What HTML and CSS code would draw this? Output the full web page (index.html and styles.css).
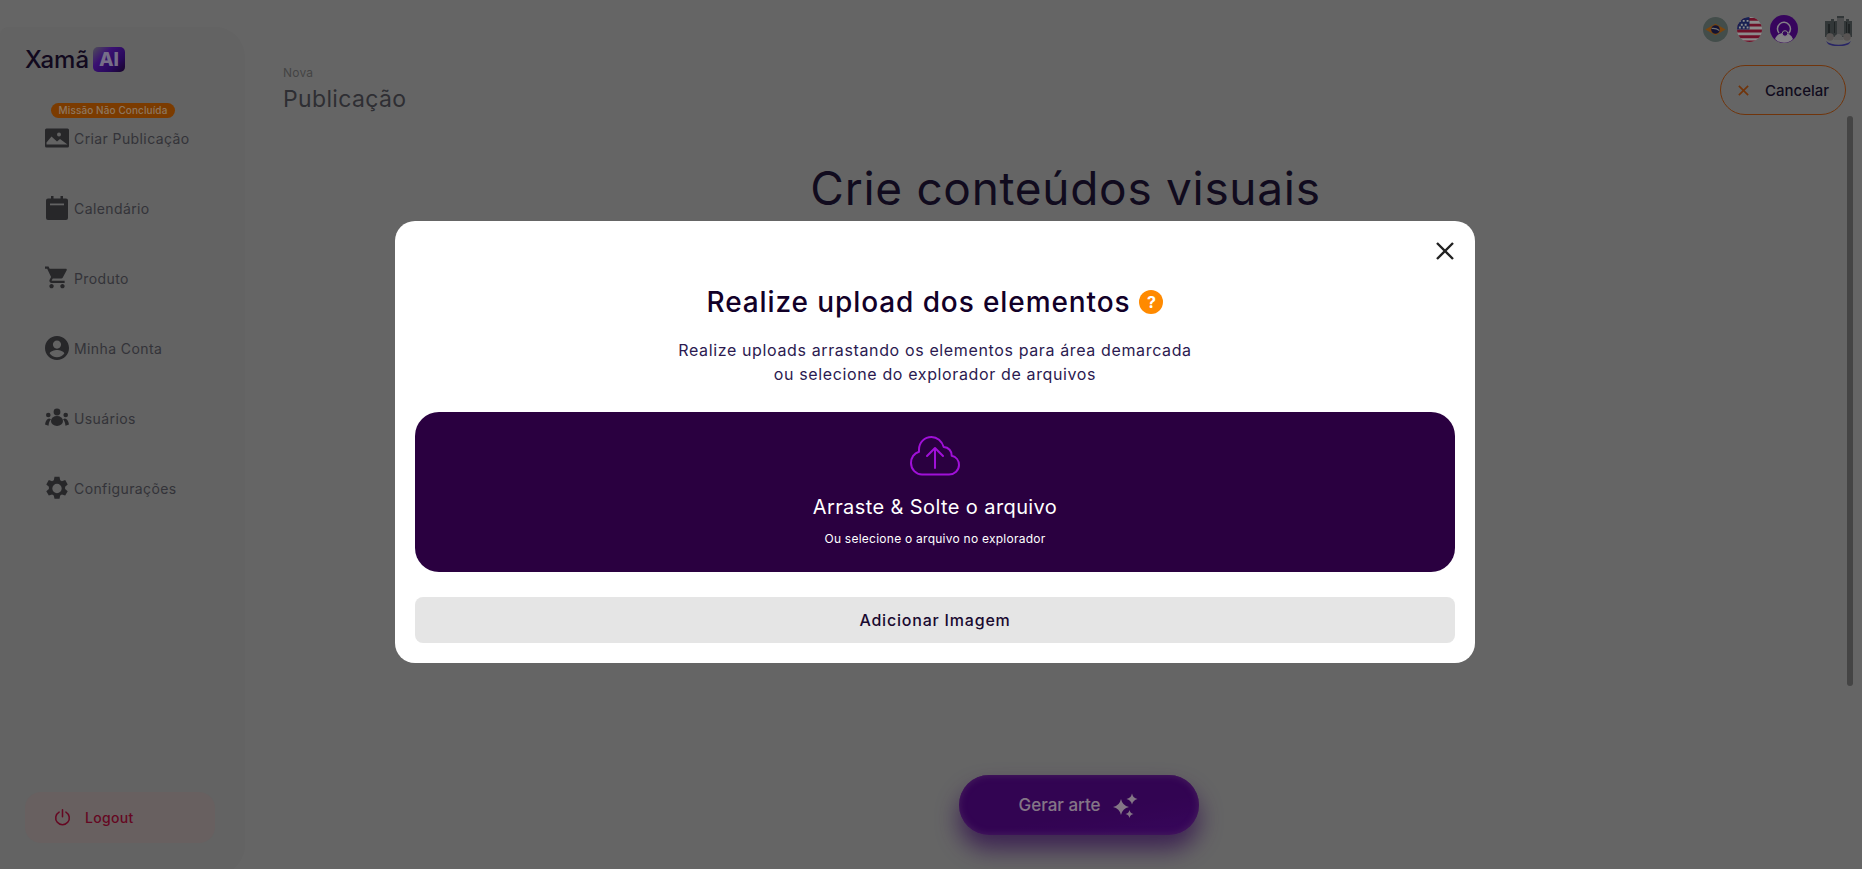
FILE: index.html
```html
<!DOCTYPE html>
<html lang="pt-BR">
<head>
<meta charset="utf-8">
<title>Xamã AI</title>
<link rel="stylesheet" href="styles.css">
</head>
<body>
<div class="app">
  <aside class="sidebar">
    <div class="logo"><span class="logo-text">Xamã</span><span class="logo-ai">AI</span></div>
    <nav class="nav">
      <a class="nav-item">
        <span class="badge">Missão Não Concluída</span>
        <svg class="nav-icon" viewBox="0 0 24 24"><path class="ic" d="M1.500 2.500h21a1.500 1.500 0 0 1 1.500 1.500v16a1.500 1.500 0 0 1-1.500 1.500h-21A1.500 1.500 0 0 1 0 20V4a1.500 1.500 0 0 1 1.500-1.500z"/><path class="ic-l" d="M1.500 18.500v-2l5-6 5.500 5 3-2.500 7.500 5.500z"/><circle class="ic-l" cx="14" cy="8.500" r="2"/></svg>
        <span>Criar Publicação</span>
      </a>
      <a class="nav-item">
        <svg class="nav-icon" viewBox="0 0 24 24"><path class="ic" d="M6 0h2.500v2.500h7V0H18v2.500h3a2 2 0 0 1 2 2V22a2 2 0 0 1-2 2H3a2 2 0 0 1-2-2V4.500a2 2 0 0 1 2-2h3z"/><rect class="ic-l" x="5" y="7.500" width="14" height="1.800"/></svg>
        <span>Calendário</span>
      </a>
      <a class="nav-item">
        <svg class="nav-icon" viewBox="1 2 22 21"><path class="ic" d="M7 18c-1.100 0-1.990.9-1.990 2S5.900 22 7 22s2-.9 2-2-.9-2-2-2zM1 2v2h2l3.600 7.590-1.350 2.450c-.16.28-.25.61-.25.96 0 1.100.9 2 2 2h12v-2H7.420c-.14 0-.25-.11-.25-.25l.03-.12.9-1.630h7.450c.75 0 1.410-.41 1.750-1.030l3.580-6.490c.08-.14.12-.31.12-.48 0-.55-.45-1-1-1H5.210l-.94-2H1zm16 16c-1.100 0-1.990.9-1.990 2s.89 2 1.990 2 2-.9 2-2-.9-2-2-2z"/></svg>
        <span>Produto</span>
      </a>
      <a class="nav-item">
        <svg class="nav-icon" viewBox="0 0 24 24"><path class="ic" d="M12 0C5.400 0 0 5.400 0 12s5.400 12 12 12 12-5.400 12-12S18.600 0 12 0zm0 4.500c2.300 0 4.100 1.800 4.100 4.100s-1.800 4.100-4.100 4.100-4.100-1.800-4.100-4.100 1.800-4.100 4.100-4.100zm0 16.800c-3 0-5.700-1.400-7.300-3.700.1-2.400 4.900-3.700 7.300-3.700s7.200 1.300 7.300 3.700c-1.600 2.300-4.300 3.700-7.300 3.700z"/></svg>
        <span>Minha Conta</span>
      </a>
      <a class="nav-item">
        <svg class="nav-icon" viewBox="0 0 24 24"><circle class="ic" cx="12" cy="6" r="3.400"/><circle class="ic" cx="3.300" cy="9" r="2.300"/><circle class="ic" cx="20.700" cy="9" r="2.300"/><ellipse class="ic" cx="12" cy="15" rx="6" ry="5"/><path class="ic" d="M4.200 12.500 C2 12.500.6 15 0 18.500l3.500 1.200C3.800 17 4.500 14.500 6 13.200zM19.800 12.500 C22 12.500 23.400 15 24 18.500l-3.500 1.200C20.200 17 19.500 14.500 18 13.200z"/></svg>
        <span>Usuários</span>
      </a>
      <a class="nav-item">
        <svg class="nav-icon" viewBox="0 0 24 24"><path class="ic" d="M9.500 0h5l.7 3.400 1.700 1 3.300-1.100 2.500 4.300-2.600 2.300v2.200l2.600 2.300-2.500 4.300-3.300-1.100-1.700 1-.7 3.400h-5l-.7-3.400-1.700-1-3.300 1.100L1.300 14.400l2.600-2.300V9.900L1.300 7.600l2.500-4.300 3.300 1.100 1.700-1zM12 7a4.700 4.700 0 1 0 0 9.400A4.700 4.700 0 0 0 12 7z" transform="translate(0 .8)"/></svg>
        <span>Configurações</span>
      </a>
    </nav>
    <button class="logout">
      <svg class="logout-icon" viewBox="0 0 20 20"><path d="M6 3.600a8 8 0 1 0 8 0M10 1v8"/></svg>
      <span>Logout</span>
    </button>
  </aside>

  <main class="main">
    <div class="topbar">
      <svg class="flag" viewBox="0 0 26 26"><circle cx="13" cy="13" r="13" fill="#7a8c88"/><path d="M13 7 23.500 13 13 19 2.500 13z" fill="#e07f18"/><circle cx="13" cy="13" r="4.500" fill="#24245c"/><path d="M9 12c2.800-.5 5.500.2 8 2" stroke="#d0d0d0" stroke-width="1.100" fill="none"/></svg>
      <svg class="flag" viewBox="0 0 26 26"><defs><clipPath id="us"><circle cx="13" cy="13" r="13"/></clipPath></defs><g clip-path="url(#us)"><rect width="26" height="26" fill="#fff"/><path d="M0 1h26v3H0zM0 7h26v3H0zM0 13h26v3H0zM0 19h26v3H0zM0 24.500h26V26H0z" fill="#c8204a"/><rect width="13" height="13" fill="#2c3c96"/><path d="M2 3h2v2H2zM6 3h2v2H6zM10 3h2v2h-2zM4 7h2v2H4zM8 7h2v2H8zM2 10h2v2H2zM6 10h2v2H6zM10 10h2v2h-2z" fill="#fff"/></g></svg>
      <svg class="avatar" viewBox="0 0 28 28"><circle cx="14" cy="14" r="14" fill="#640aaa"/><path d="M5 24c1.500-4 4.500-6 9-6s7.500 2 9 6a12.500 12.500 0 0 1-18 0z" fill="#f0ecf4"/><path d="M9 18a6.500 6.500 0 1 1 9.500 .5" fill="none" stroke="#f0ecf4" stroke-width="1.500"/><circle cx="15" cy="18.500" r="2.800" fill="#640aaa" stroke="#f0ecf4" stroke-width="1"/></svg>
      <svg class="building" viewBox="0 0 27 30"><path d="M0 5h6V3h3v2h3V0h7v5h2V3h3v2h3v16H0z" fill="#5b6466"/><rect x="12" y="2" width="7" height="18" fill="#8c8f90"/><path d="M9 6h1v11H9zM21 6h1v11h-1zM3 8h2v9H3zM23 8h2v9h-2z" fill="#3a4042"/><circle cx="5" cy="21" r="3.800" fill="#a09a98"/><circle cx="22" cy="21" r="3.800" fill="#a09a98"/><path d="M9 24c0-8 9-8 9 0z" fill="#aaa"/><path d="M1 25c6 5 19 5 25 0l-2 3c-5 3-16 3-21 0z" fill="#4b46b8"/></svg>
    </div>

    <div class="page-head">
      <div>
        <div class="kicker">Nova</div>
        <h1 class="page-title">Publicação</h1>
      </div>
      <button class="cancel">
        <svg class="cancel-x" viewBox="0 0 14 14"><path d="M2 2l10 10M12 2 2 12"/></svg>
        <span>Cancelar</span>
      </button>
    </div>

    <h2 class="hero">Crie conteúdos visuais</h2>

    <button class="generate">
      <span>Gerar arte</span>
      <svg class="sparkles" viewBox="0 0 26 26"><path d="M8 7Q9.400 13.600 16 15Q9.400 16.400 8 23Q6.600 16.400 0 15Q6.600 13.600 8 7z"/><path d="M19 1.500Q20 6 24.500 7Q20 8 19 12.500Q18 8 13.500 7Q18 6 19 1.500z"/><path d="M16.500 18Q17.200 21.300 20.500 22Q17.200 22.700 16.500 26Q15.800 22.700 12.500 22Q15.800 21.300 16.500 18z"/></svg>
    </button>

    <div class="scroll-thumb"></div>
  </main>
</div>

<div class="overlay">
  <section class="modal">
    <button class="close" aria-label="Fechar">
      <svg viewBox="0 0 18 18"><path d="M1 1l16 16M17 1 1 17"/></svg>
    </button>
    <div class="modal-head">
      <h3 class="modal-title">Realize upload dos elementos</h3>
      <span class="help">?</span>
    </div>
    <p class="modal-sub">Realize uploads arrastando os elementos para área demarcada<br>ou selecione do explorador de arquivos</p>
    <div class="dropzone">
      <svg class="cloud" viewBox="0 0 50 40"><path d="M12 38.500h27c5.500 0 10-4.300 10-9.500 0-4.500-3-8.200-7.300-9.200.3-4.700-3.200-8.500-8-8.700C32 5 27 1 21.500 1 14.500 1 9 6.500 9 13.500v2.200C4 17 1 21.800 1 27c0 6.300 5 11.500 11 11.500z"/><path d="M25 32V12M17 20l8-8 8 8"/></svg>
      <div class="drop-title">Arraste &amp; Solte o arquivo</div>
      <div class="drop-sub">Ou selecione o arquivo no explorador</div>
    </div>
    <button class="add-image">Adicionar Imagem</button>
  </section>
</div>
</body>
</html>
```
FILE: styles.css
```css
* { box-sizing: border-box; }
html, body { margin: 0; height: 100%; overflow: hidden; }
body { background: #b9b9b9; font-family: Inter, "Noto Sans", sans-serif; color: #201538; }
button { font-family: inherit; border: 0; padding: 0; background: none; }
h1, h2, h3, p { margin: 0; font-weight: 400; }

.app { display: flex; height: 869px; }

.sidebar {
  flex: 0 0 245px; height: 848px; margin-top: 27px; padding: 20px 30px 32px 25px;
  background: #b4b4b4; border-radius: 8px 30px 30px 0;
  display: flex; flex-direction: column;
}
.logo { display: flex; align-items: center; gap: 4px; height: 25px; }
.logo-text { font-size: 24px; font-weight: 500; color: #221238; }
.logo-ai {
  width: 32px; height: 25px; border-radius: 5px; display: flex; align-items: center; justify-content: center;
  background: linear-gradient(135deg, #8f8f9f 0%, #6a1fd0 35%, #4a10a8 70%, #2a0848 100%);
  color: #d8c8f8; font-weight: 800; font-size: 19px;
}
.nav { display: flex; flex-direction: column; gap: 46px; margin-top: 54px; padding-left: 20px; }
.nav-item { position: relative; display: flex; align-items: center; gap: 5px; height: 24px; font-size: 14px; color: #5e5e68; white-space: nowrap; letter-spacing: .4px; }
.nav-icon { width: 24px; height: 24px; flex: none; }
.ic { fill: #47474c; }
.ic-l { fill: #b4b4b4; }
.badge {
  position: absolute; left: 6px; top: -23px; width: 124px; height: 15px; border-radius: 8px;
  background: #e06c00; color: #ffd8b0; font-size: 10px; font-weight: 500; line-height: 15px; text-align: center; letter-spacing: .1px;
}
.logout {
  margin-top: auto; width: 190px; height: 51px; border-radius: 16px; background: #bdafaf;
  display: flex; align-items: center; gap: 14px; padding-left: 29px;
  color: #b80e3e; font-size: 14px; font-weight: 500; letter-spacing: .3px;
}
.logout-icon { width: 17px; height: 17px; fill: none; stroke: #b80e3e; stroke-width: 1.800; stroke-linecap: round; }

.main { position: relative; flex: 1; display: flex; flex-direction: column; padding: 14px 10px 34px 38px; }
.topbar { display: flex; align-items: center; justify-content: flex-end; height: 30px; }
.flag { width: 25px; height: 25px; margin-left: 9px; }
.avatar { width: 28px; height: 28px; margin-left: 8px; }
.building { width: 27px; height: 30px; margin-left: 27px; margin-top: 4px; }

.page-head { display: flex; justify-content: space-between; align-items: flex-start; margin-top: 21px; padding-right: 6px; }
.kicker { font-size: 12px; color: #7c7c7c; letter-spacing: .2px; line-height: 16px; }
.page-title { font-size: 23px; color: #55555d; line-height: 32px; letter-spacing: .35px; margin-top: 2px; }
.cancel {
  width: 126px; height: 50px; border: 1.500px solid #cc6015; border-radius: 25px;
  display: flex; align-items: center; justify-content: center; gap: 15px;
  font-size: 15px; font-weight: 500; color: #201538;
}
.cancel-x { width: 13px; height: 13px; fill: none; stroke: #cc6015; stroke-width: 1.800; }

.hero { text-align: center; font-size: 46px; color: #201538; line-height: 60px; margin: 43px 4px 0 0; letter-spacing: .7px; }

.generate {
  margin: auto 0 0 0; align-self: center; position: relative; left: 11px;
  width: 240px; height: 60px; border-radius: 30px; flex: none;
  background: linear-gradient(170deg, #5c0896 60%, #660ca6 100%);
  box-shadow: inset 0 0 6px 1px #7c34a8, 0 14px 24px rgba(90, 30, 140, .8);
  display: flex; align-items: center; justify-content: center; gap: 12px;
  color: #f0d8f4; font-size: 17px; font-weight: 500;
}
.sparkles { width: 26px; height: 26px; fill: #f0d8f4; }
.scroll-thumb { position: absolute; right: 9px; top: 116px; width: 6px; height: 570px; border-radius: 3px; background: #7c7c7c; }

.overlay {
  position: fixed; inset: 0; background: rgba(0, 0, 0, .45);
  display: flex; justify-content: center; align-items: flex-start; padding: 221px 0 0 8px;
}
.modal { position: relative; width: 1080px; height: 442px; background: #fff; border-radius: 20px; padding: 20px; display: flex; flex-direction: column; }
.close { position: absolute; top: 20px; right: 20px; width: 20px; height: 20px; display: flex; align-items: center; justify-content: center; }
.close svg { width: 18px; height: 18px; fill: none; stroke: #222; stroke-width: 2.400; }
.modal-head { display: flex; align-items: center; justify-content: center; gap: 9px; margin-top: 44px; height: 34px; }
.modal-title { font-size: 28px; font-weight: 500; color: #120028; letter-spacing: .9px; white-space: nowrap; }
.help { width: 24px; height: 24px; border-radius: 50%; background: #ff8a00; color: #fff; font-size: 16px; font-weight: 700; line-height: 24px; text-align: center; }
.modal-sub { margin-top: 19px; text-align: center; font-size: 16px; line-height: 24px; color: #2b1a50; letter-spacing: .63px; }
.dropzone {
  margin-top: 26px; height: 160px; border-radius: 24px; background: #2a0040; color: #fff;
  display: flex; flex-direction: column; align-items: center; padding-top: 24px;
}
.cloud { width: 50px; height: 40px; fill: none; stroke: #a010d8; stroke-width: 2; stroke-linecap: round; stroke-linejoin: round; }
.drop-title { margin-top: 17px; font-size: 20px; line-height: 28px; letter-spacing: .4px; }
.drop-sub { margin-top: 10px; font-size: 12px; line-height: 16px; letter-spacing: .25px; }
.add-image { margin-top: 25px; height: 46px; border-radius: 8px; background: #e5e5e5; color: #1a0a30; font-size: 16px; font-weight: 500; letter-spacing: .8px; }
```
